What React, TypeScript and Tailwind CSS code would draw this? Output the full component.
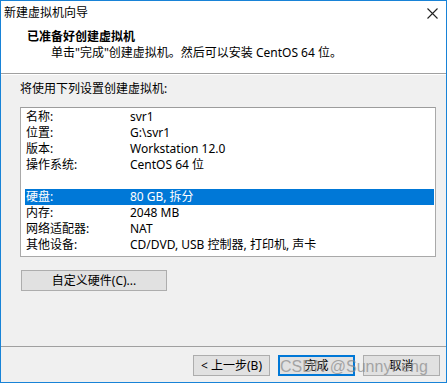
const rows: [string, string][] = [
  ["名称:", "svr1"],
  ["位置:", "G:\\svr1"],
  ["版本:", "Workstation 12.0"],
  ["操作系统:", "CentOS 64 位"],
  ["", ""],
  ["硬盘:", "80 GB, 拆分"],
  ["内存:", "2048 MB"],
  ["网络适配器:", "NAT"],
  ["其他设备:", "CD/DVD, USB 控制器, 打印机, 声卡"],
];

const font = { fontFamily: '"Noto Sans", "Noto Sans CJK SC", sans-serif' };

function WinButton({ label, primary }: { label: string; primary?: boolean }) {
  return (
    <button
      className={
        "h-[21px] w-[77px] bg-[#e1e1e1] text-[12px] leading-none text-black " +
        (primary ? "border-2 border-[#0078d7]" : "border border-[#adadad]")
      }
    >
      {label}
    </button>
  );
}

export default function App() {
  return (
    <div className="h-[383px] w-[447px] overflow-hidden bg-[#f0f0f0]" style={font}>
      <div className="flex h-full flex-col border border-[#1883d7]">
        {/* title bar + header */}
        <div className="bg-white">
          <div className="flex h-[23px] items-center justify-between pl-[3px] pr-[8px] text-[12px] text-black">
            <span>新建虚拟机向导</span>
            <svg width="11" height="11" viewBox="0 0 11 11" className="mt-[1px]">
              <path d="M0.5 0.5 L10.5 10.5 M10.5 0.5 L0.5 10.5" stroke="#222" strokeWidth="1.1" />
            </svg>
          </div>
          <div className="border-b border-[#a0a0a0] pb-[12px] pt-[5px] text-[12px] leading-[16px] text-black">
            <div className="pl-[26px] font-bold">已准备好创建虚拟机</div>
            <div className="pl-[50px]">单击"完成"创建虚拟机。然后可以安装 CentOS 64 位。</div>
          </div>
        </div>

        {/* body */}
        <div className="flex flex-1 flex-col border-t border-white px-[19px] pt-[6px]">
          <div className="pl-[0px] text-[12px] leading-[16px] text-black">将使用下列设置创建虚拟机:</div>
          <div className="mt-[10px] h-[150px] w-[416px] border border-[#a9a9a9] border-t-[#9c9c9c] bg-white pl-[4px] pr-[1px] pt-[1px]">
            {rows.map(([k, v], i) => (
              <div
                key={i}
                className={
                  "flex h-[16px] items-center pl-[1px] text-[12px] leading-[16px] " +
                  (k === "硬盘:" ? "bg-[#0078d7] text-white" : "text-black")
                }
              >
                <span className="w-[104px]">{k}</span>
                <span>{v}</span>
              </div>
            ))}
          </div>
          <button className="ml-[1px] mt-[13px] h-[21px] w-[146px] border border-[#adadad] bg-[#e1e1e1] text-[12px] leading-none text-black">
            自定义硬件(C)...
          </button>
          <div className="flex-1" />
        </div>

        {/* footer */}
        <div className="relative border-t border-[#a0a0a0]">
          <div className="flex justify-end gap-[8px] pb-[6px] pr-[6px] pt-[8px]">
            <WinButton label="< 上一步(B)" />
            <WinButton label="完成" primary />
            <WinButton label="取消" />
          </div>
          <div
            className="pointer-events-none absolute left-[279px] top-[10px] text-[16px] leading-[20px] text-[#8a8a8a] opacity-70"
            style={{ fontFamily: '"Liberation Sans", sans-serif' }}
          >
            CSDN @SunnyFeng
          </div>
        </div>
      </div>
    </div>
  );
}
